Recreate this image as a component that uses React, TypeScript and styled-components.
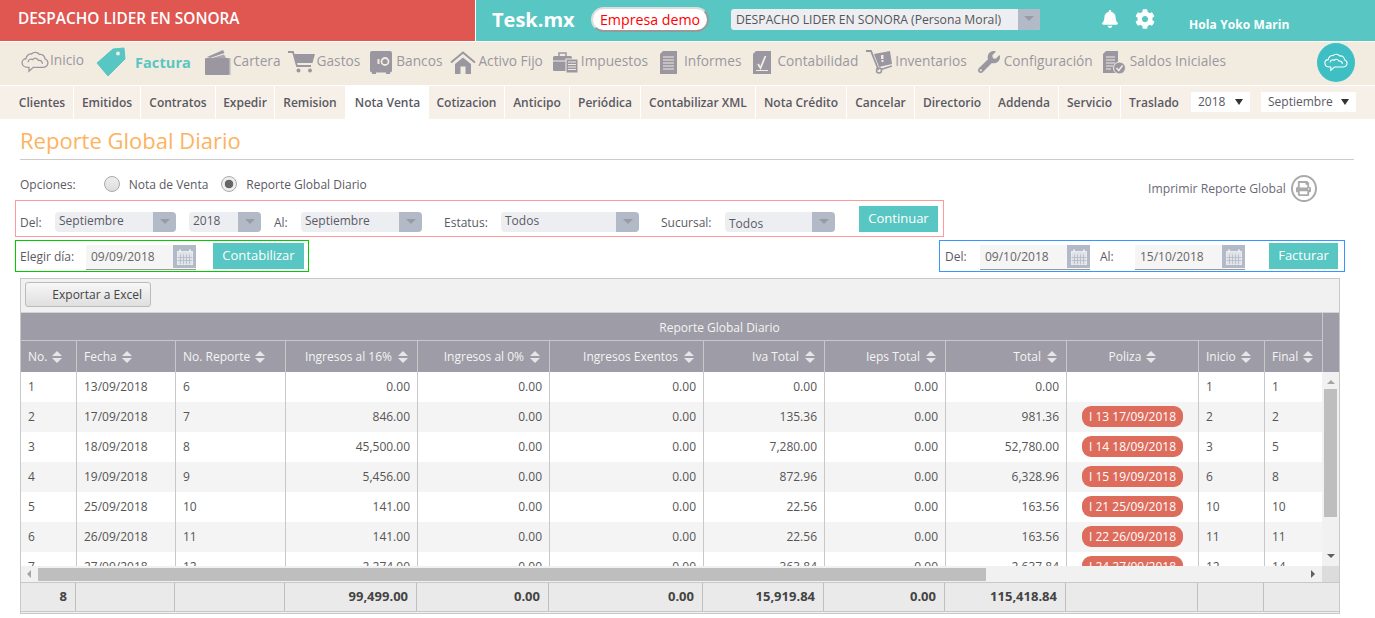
import React from "react";
import styled, { createGlobalStyle } from "styled-components";
import { FaBell, FaCog, FaPrint, FaWrench } from "react-icons/fa";

const Global = createGlobalStyle`
  html, body { margin: 0; padding: 0; background: #fff; }
  body { font-family: "Open Sans", "Liberation Sans", sans-serif; color: #555; overflow: hidden; }
  * { box-sizing: border-box; }
`;

const Page = styled.div`width: 1375px; height: 618px; overflow: hidden;`;
const TopBar = styled.header`display: flex; height: 41px;`;
const Brand = styled.div`
  width: 476px; flex: none; background: #e05651; color: #fff; font-size: 15.4px; font-weight: 600;
  padding: 0 18px; line-height: 37px; border-right: 1px solid #fff; white-space: nowrap;
`;
const TopRight = styled.div`flex: 1; background: #58c6c2; display: flex; align-items: center; color: #fff;`;
const Logo = styled.div`font-size: 20px; font-weight: 700; margin-left: 16px; width: 99px; margin-top: -2px;`;
const DemoPill = styled.div`
  width: 118px; height: 25px; border-radius: 13px; background: #fff; color: #f00; font-size: 14.2px;
  border: 2px solid #ddd; border-right-color: #999; border-bottom-color: #999; text-align: center;
  line-height: 21px; margin-top: -2px; white-space: nowrap;
`;
const CompanySelect = styled.div`
  margin-left: 22px; margin-top: -2px; width: 309px; height: 21px; background: #edeef2; border-radius: 3px;
  display: flex; overflow: hidden; color: #555; font-size: 12.2px; line-height: 21px;
`;
const SelectText = styled.span`flex: 1; padding-left: 5px; white-space: nowrap;`;
const Arrow = styled.span<{ $w: number }>`
  width: ${p => p.$w}px; flex: none; background: #b3bac7; display: flex; justify-content: center; padding-top: 7px;
  &::after { content: ""; border: 5px solid transparent; border-top: 5px solid #9a9aa2; border-bottom: 0; height: 0; }
`;
const TopIcons = styled.div`margin-left: 61px; display: flex; gap: 16px; font-size: 18px; margin-top: -4px; align-items: center; width: 72px;`;
const GearWrap = styled.span`display: flex; font-size: 20px;`;
const Hello = styled.div`margin-left: 16px; font-size: 12px; font-weight: 700; margin-top: 8px; letter-spacing: 0.1px;`;

const MainNav = styled.nav`
  height: 44px; margin-top: 1px; background: #f2ece0; display: flex; align-items: center; padding: 0 0 3px 20px; position: relative;
  border-bottom: 1px solid #fff;
`;
const NavItem = styled.div<{ $ml?: number }>`
  display: flex; align-items: center; margin-left: ${p => p.$ml ?? 0}px;
  color: #9a97a1; font-size: 13.7px; font-weight: 500; white-space: nowrap;
`;
const NavLabel = styled.span<{ $ml: number }>`position: relative; top: -2px; margin-left: ${p => p.$ml}px;`;
const ActiveLabel = styled.span`margin-left: 9px; color: #58c6c2; font-size: 14.5px; font-weight: 700; letter-spacing: 0.1px;`;
const NavSvg = styled.svg`flex: none; display: block;`;
const WrenchWrap = styled.span`display: flex; font-size: 22px; color: #9a97a1; width: 22px;`;
const CloudBtn = styled.div`
  position: absolute; left: 1317px; top: 1px; width: 38px; height: 39px; border-radius: 50%; background: #3dbfc4;
  display: flex; align-items: center; justify-content: center;
`;

const SubNav = styled.nav`height: 33px; background: #f6f0e8; display: flex; padding-left: 11px; align-items: stretch;`;
const SubItem = styled.div<{ $w: number; $active?: boolean; $last?: boolean }>`
  width: ${p => p.$w}px; text-align: center; font-size: 12px; font-weight: 600; line-height: 33px; color: #5a5963;
  border-right: ${p => (p.$active || p.$last) ? "0" : "1px solid #fff"}; background: ${p => p.$active ? "#fff" : "transparent"}; white-space: nowrap;
`;
const SubSelect = styled.div<{ $w: number; $ml: number }>`
  width: ${p => p.$w}px; margin-left: ${p => p.$ml}px; height: 20px; margin-top: 6px; background: #fff; font-size: 12px;
  line-height: 20px; padding: 0 7px; color: #5a5963; display: flex; justify-content: space-between; align-items: center;
  &::after { content: ""; border: 4px solid transparent; border-top: 6px solid #333; border-bottom: 0; height: 0; }
`;

const Content = styled.main`padding: 0 0 0 20px; position: relative;`;
const Title = styled.h1`
  margin: 0; width: 1334px; font-size: 22px; font-weight: 400; color: #fdb35f; height: 41px; line-height: 42px; border-bottom: 1px solid #ccc;
`;
const Options = styled.div`display: flex; align-items: center; height: 26px; margin-top: 11px; font-size: 12px; color: #5b5a64;`;
const Radio = styled.span<{ $on?: boolean; $ml: number }>`
  width: 16px; height: 16px; border-radius: 50%; border: 1px solid #aaa; margin-left: ${p => p.$ml}px; margin-right: 9px; flex: none;
  background: ${p => p.$on ? "radial-gradient(circle, #666 0 4px, #eee 4.6px)" : "linear-gradient(#eee, #ddd)"};
`;
const PrintLink = styled.div`
  position: absolute; left: 1148px; top: 56px; display: flex; align-items: center; gap: 5px; font-size: 12.2px; color: #6d6a78;
`;
const PrintCircle = styled.span`
  width: 26px; height: 27px; border: 2px solid #aaa; border-radius: 50%; display: flex; align-items: center; justify-content: center; color: #aaa; font-size: 15px;
`;
const FilterBox = styled.div`
  margin: 3px 0 0 -5px; width: 929px; height: 37px; border: 1px solid #ff9a9a; display: flex; align-items: flex-start; font-size: 12px; color: #5b5a64;
`;
const Lbl = styled.span<{ $w: number; $ml?: number; $mt?: number }>`
  width: ${p => p.$w}px; margin-left: ${p => p.$ml ?? 0}px; margin-top: ${p => p.$mt ?? 0}px; flex: none; white-space: nowrap;
`;
const Sel = styled.div<{ $w: number; $ml?: number }>`
  width: ${p => p.$w}px; margin-left: ${p => p.$ml ?? 0}px; margin-top: 11px; height: 20px; flex: none; background: #edeef2; border-radius: 4px; overflow: hidden;
  display: flex; line-height: 18px; color: #5b5a64; font-size: 12px;
`;
const SelTxt = styled.span<{ $dy?: number }>`flex: 1; padding-left: 4px; padding-top: ${p => p.$dy ?? 0}px;`;
const ActionBtn = styled.div<{ $w: number; $ml?: number; $mt?: number }>`
  width: ${p => p.$w}px; height: 26px; margin-left: ${p => p.$ml ?? 0}px; margin-top: ${p => p.$mt ?? 0}px; background: #58c6c2; color: #fff; font-size: 13px; flex: none;
  text-align: center; line-height: 25px;
`;
const DateRow = styled.div`display: flex; margin-left: -5px; margin-top: 3px; width: 1330px; justify-content: space-between;`;
const DateBox = styled.div<{ $c: string; $w: number }>`
  width: ${p => p.$w}px; height: 32px; border: 1px solid ${p => p.$c}; display: flex; align-items: center; font-size: 12px; color: #5b5a64;
`;
const DateField = styled.div`
  width: 110px; height: 25px; flex: none; background: #f5f5f5; border-bottom: 1px solid #999; display: flex; justify-content: space-between; line-height: 23px; padding-left: 5px; color: #666; margin-top: 3px;
`;
const CalBtn = styled.span`
  width: 23px; height: 23px; background: #b3bac7; display: flex; align-items: center; justify-content: center;
`;

const Panel = styled.section`
  margin-top: 6px; width: 1320px; height: 336px; border: 1px solid #c8c8c8; background: #f1f1f1; display: flex; flex-direction: column;
`;
const PanelBar = styled.div`height: 33px; padding: 3px 4px; flex: none;`;
const ExcelBtn = styled.div`
  width: 126px; height: 25px; border: 1px solid #bbb; border-radius: 3px; background: linear-gradient(#f7f7f7, #dfdfdf); font-size: 12px; color: #444;
  text-align: right; padding-right: 8px; line-height: 24px;
`;
const TableHead = styled.div`display: flex; background: #9e9ca6; height: 60px; flex: none; color: #fff; border-top: 1px solid #d3d3d3;`;
const HeadMain = styled.div`width: 1302px; border-right: 1px solid #c8c8c8;`;
const HeadTitle = styled.div`
  height: 28px; border-bottom: 1px solid #c8c8c8; text-align: center; font-size: 12px; font-weight: 400; line-height: 29px; color: #f4f4f4; padding-left: 96px;
`;
const HeadRow = styled.div`display: flex; height: 31px;`;
const HCell = styled.div<{ $w: number; $a: string }>`
  width: ${p => p.$w}px; flex: none; border-right: 1px solid #c8c8c8; font-size: 12px; color: #f4f4f4; line-height: 30px;
  padding: 0 ${p => p.$a === "flex-end" ? 9 : 7}px 0 7px;
  display: flex; align-items: center; justify-content: ${p => p.$a}; gap: ${p => p.$a === "flex-end" ? 6 : 5}px; white-space: nowrap;
  &:last-child { border-right: 0; }
`;
const SortIcon = styled.span`
  display: inline-flex; flex-direction: column; gap: 2px;
  &::before { content: ""; border: 5px solid transparent; border-bottom: 5px solid #e6e6e9; border-top: 0; }
  &::after { content: ""; border: 5px solid transparent; border-top: 5px solid #e6e6e9; border-bottom: 0; }
`;
const BodyWrap = styled.div`display: flex; height: 194px; flex: none; background: #fff;`;
const BodyClip = styled.div`width: 1301px; height: 194px; overflow: hidden;`;
const Tbl = styled.table`border-collapse: separate; border-spacing: 0; table-layout: fixed; width: 1301px;`;
const Col = styled.col<{ $w: number }>`width: ${p => p.$w}px;`;
const Tr = styled.tr<{ $alt: boolean }>`background: ${p => p.$alt ? "#f4f4f4" : "#fff"};`;
const Td = styled.td<{ $r?: boolean }>`
  height: 30px; padding: 0 7px; font-size: 12px; color: #555; border-right: 1px solid #c8c8c8;
  text-align: ${p => p.$r ? "right" : "left"}; white-space: nowrap; line-height: 28px;
  &:last-child { border-right: 0; }
`;
const PolizaTd = styled(Td)`text-align: center; padding: 0;`;
const Badge = styled.span`
  display: inline-block; width: 101px; height: 21px; margin-top: 3px; border-radius: 9px; background: #de6c5c; color: #fff; font-size: 12px; line-height: 21px; vertical-align: top;
`;
const VBar = styled.div`width: 17px; background: #f1f1f1; display: flex; flex-direction: column; align-items: center;`;
const ArrowUp = styled.span`margin-top: 8px; border: 4px solid transparent; border-bottom: 4px solid #a5a5a5; border-top: 0;`;
const ArrowDown = styled.span`margin-top: auto; margin-bottom: 8px; border: 4px solid transparent; border-top: 4px solid #606060; border-bottom: 0;`;
const VThumb = styled.div`width: 13px; height: 128px; background: #bebebe; margin-top: 5px;`;
const HBarWrap = styled.div`display: flex; height: 16px; flex: none;`;
const HBar = styled.div`width: 1301px; background: #f1f1f1; display: flex; align-items: center; padding-left: 6px;`;
const ArrowLeft = styled.span`border: 4px solid transparent; border-right: 4px solid #a5a5a5; border-left: 0;`;
const HThumb = styled.div`width: 948px; height: 13px; margin-left: 7px; background: #bebebe;`;
const ArrowRight = styled.span`margin-left: auto; margin-right: 7px; border: 4px solid transparent; border-left: 4px solid #606060; border-right: 0;`;
const Corner = styled.div`width: 17px; background: #dcdcdc;`;
const Foot = styled.div`display: flex; height: 30px; flex: none; border-top: 1px solid #c8c8c8; border-bottom: 1px solid #c8c8c8; background: #eaeaea;`;
const FCell = styled.div<{ $w: number }>`
  width: ${p => p.$w}px; flex: none; border-right: 1px solid #c0c0c0; text-align: right; padding: 0 8px; font-size: 13px; font-weight: 700; color: #444; line-height: 27px;
  &:last-child { border-right: 0; }
`;

const Cloud = ({ c, s }: { c: string; s: number }) => (
  <NavSvg width={s} height={s * 0.8} viewBox="0 0 32 26" fill="none" stroke={c} strokeWidth="1.5">
    <path d="M8 19C3 19 1 16 1 13.500 1 11 3 9 5.500 9 6 5 9 3 12 3.500 14 1 19 1 21 4 25 3.500 27.500 6 27.500 9 30 10 31 12 31 14 31 17 28 19 25 19L14 19 9 23.500 9 19Z" />
    <path d="M8 13C8 10 11 8.500 13.500 10 15 7.500 19 8 20 11 23 10.500 25 12.500 24.500 15" />
  </NavSvg>
);

const Calendar = () => (
  <NavSvg width="16" height="16" viewBox="0 0 16 16" fill="none" stroke="#e9ecef">
    <rect x="0.500" y="2.500" width="15" height="13" fill="#dfe3e8" />
    <path d="M3 0.500v3M13 0.500v3" strokeWidth="2" />
    <path d="M3.500 5.500v10M6.500 5.500v10M9.500 5.500v10M12.500 5.500v10M0.500 8.500h15M0.500 11.500h15" stroke="#b3bac7" strokeWidth="0.800" />
  </NavSvg>
);

const Tag = () => (
  <NavSvg width="30" height="30" viewBox="0 0 30 30">
    <path d="M1 16 17 2 28 1 29 12 12 29Z" fill="#58c6c2" stroke="#58c6c2" strokeWidth="1" strokeLinejoin="round" />
    <circle cx="22" cy="6.500" r="2" fill="#f2ece0" />
  </NavSvg>
);
const Wallet = () => (
  <NavSvg width="26" height="25" viewBox="0 0 26 25" fill="#9a97a1">
    <path d="M2 7 18 0 19.500 3 5 8Z" />
    <path d="M7 8 19 4.500 21 8Z" fill="#aaa7b0" />
    <rect x="0" y="8" width="24" height="17" rx="1" />
    <rect x="24" y="8" width="1.500" height="17" fill="#b5b3bb" />
  </NavSvg>
);
const Cart = () => (
  <NavSvg width="27" height="22" viewBox="0 0 27 22" fill="#9a97a1">
    <path d="M0 1H5L9 15H23" fill="none" stroke="#9a97a1" strokeWidth="1.800" />
    <path d="M6 3H27L24.500 12H8.500Z" />
    <circle cx="10.500" cy="19.500" r="2" />
    <circle cx="22" cy="19.500" r="2" />
  </NavSvg>
);
const Safe = () => (
  <NavSvg width="22" height="23" viewBox="0 0 22 23">
    <rect x="0" y="0" width="22" height="21.500" rx="2" fill="#9a97a1" />
    <rect x="2" y="21" width="4" height="2" fill="#9a97a1" />
    <rect x="16" y="21" width="4" height="2" fill="#9a97a1" />
    <circle cx="15" cy="10.500" r="3.500" fill="none" stroke="#f2ece0" strokeWidth="1.800" />
    <rect x="7.500" y="8" width="2" height="5" fill="#f2ece0" />
  </NavSvg>
);
const House = () => (
  <NavSvg width="26" height="23" viewBox="0 0 26 23" fill="#9a97a1">
    <path d="M1 11.500 13 1.500 25 11.500" fill="none" stroke="#9a97a1" strokeWidth="2" />
    <path d="M5 13 13 6.500 21 13V23H15.500V15.500H10.500V23H5Z" />
  </NavSvg>
);
const Clip = () => (
  <NavSvg width="25" height="21" viewBox="0 0 25 21" fill="#9a97a1">
    <rect x="0" y="4" width="19" height="15" rx="1.500" />
    <rect x="6" y="1" width="7" height="4" fill="none" stroke="#9a97a1" strokeWidth="1.500" />
    <path d="M0 9H13" stroke="#f2ece0" />
    <rect x="13" y="7" width="12" height="14" stroke="#f2ece0" />
    <path d="M15 10H23M15 12.500H23M15 15H23M15 17.500H23" stroke="#f2ece0" />
  </NavSvg>
);
const Doc = () => (
  <NavSvg width="17" height="23" viewBox="0 0 17 23" fill="#9a97a1">
    <path d="M3 0H17V23H0V3Z" />
    <path d="M3 6H14M3 9H14M3 12H14M3 15H14M3 18H14" stroke="#f2ece0" strokeWidth="1.200" />
  </NavSvg>
);
const Ledger = () => (
  <NavSvg width="18" height="23" viewBox="0 0 18 23" fill="#9a97a1">
    <path d="M3 0H18V23H0V3Z" />
    <path d="M5 13 7.500 17 12.500 5" stroke="#f2ece0" strokeWidth="1.800" fill="none" />
    <path d="M3 19.500H15" stroke="#f2ece0" strokeWidth="1" />
  </NavSvg>
);
const Truck = () => (
  <NavSvg width="26" height="24" viewBox="0 0 26 24" fill="#9a97a1">
    <path d="M0 1H5L12.500 20" stroke="#9a97a1" strokeWidth="1.800" fill="none" />
    <path d="M8 4 24 1 26 14 13 17Z" />
    <rect x="15" y="5" width="2.500" height="4" fill="#f2ece0" />
    <rect x="15.500" y="10" width="2" height="2" fill="#f2ece0" />
    <circle cx="13" cy="20.500" r="2.500" fill="none" stroke="#9a97a1" strokeWidth="1.500" />
    <path d="M15 19.500 26 16" stroke="#9a97a1" strokeWidth="1.500" />
  </NavSvg>
);
const DocCheck = () => (
  <NavSvg width="23" height="23" viewBox="0 0 23 23" fill="#9a97a1">
    <path d="M3 0H15V22H0V3Z" />
    <path d="M3 6H12M3 9H12M3 12H12M3 15H10M3 18H8" stroke="#f2ece0" strokeWidth="1.200" />
    <circle cx="16.500" cy="17" r="6" stroke="#f2ece0" strokeWidth="1" />
    <path d="M13.500 17 15.800 19.500 19.500 14.500" stroke="#f2ece0" strokeWidth="1.500" fill="none" />
  </NavSvg>
);

const subs: [string, number, boolean?][] = [
  ["Clientes", 63], ["Emitidos", 67], ["Contratos", 75], ["Expedir", 59], ["Remision", 71],
  ["Nota Venta", 83, true], ["Cotizacion", 76], ["Anticipo", 65], ["Periódica", 71], ["Contabilizar XML", 115],
  ["Nota Crédito", 91], ["Cancelar", 68], ["Directorio", 75], ["Addenda", 69], ["Servicio", 62], ["Traslado", 66],
];

const cols = [56, 99, 110, 132, 132, 154, 121, 121, 121, 132, 66, 57];
const heads: [string, string][] = [
  ["No.", "flex-start"], ["Fecha", "flex-start"], ["No. Reporte", "flex-start"], ["Ingresos al 16%", "flex-end"],
  ["Ingresos al 0%", "flex-end"], ["Ingresos Exentos", "flex-end"], ["Iva Total", "flex-end"], ["Ieps Total", "flex-end"],
  ["Total", "flex-end"], ["Poliza", "center"], ["Inicio", "flex-start"], ["Final", "flex-start"],
];
const rows = [
  ["1", "13/09/2018", "6", "0.00", "0.00", "0.00", "0.00", "0.00", "0.00", "", "1", "1"],
  ["2", "17/09/2018", "7", "846.00", "0.00", "0.00", "135.36", "0.00", "981.36", "I 13 17/09/2018", "2", "2"],
  ["3", "18/09/2018", "8", "45,500.00", "0.00", "0.00", "7,280.00", "0.00", "52,780.00", "I 14 18/09/2018", "3", "5"],
  ["4", "19/09/2018", "9", "5,456.00", "0.00", "0.00", "872.96", "0.00", "6,328.96", "I 15 19/09/2018", "6", "8"],
  ["5", "25/09/2018", "10", "141.00", "0.00", "0.00", "22.56", "0.00", "163.56", "I 21 25/09/2018", "10", "10"],
  ["6", "26/09/2018", "11", "141.00", "0.00", "0.00", "22.56", "0.00", "163.56", "I 22 26/09/2018", "11", "11"],
  ["7", "27/09/2018", "12", "2,274.00", "0.00", "0.00", "363.84", "0.00", "2,637.84", "I 24 27/09/2018", "12", "14"],
];
const foot = ["8", "", "", "99,499.00", "0.00", "0.00", "15,919.84", "0.00", "115,418.84", "", "", ""];
const footW = [55, 99, 110, 132, 132, 154, 121, 121, 121, 132, 66, 58];
const rightCols = new Set([3, 4, 5, 6, 7, 8]);

export default function App() {
  return (
    <Page>
      <Global />
      <TopBar>
        <Brand>DESPACHO LIDER EN SONORA</Brand>
        <TopRight>
          <Logo>Tesk.mx</Logo>
          <DemoPill>Empresa demo</DemoPill>
          <CompanySelect>
            <SelectText>DESPACHO LIDER EN SONORA (Persona Moral)</SelectText>
            <Arrow $w={22} />
          </CompanySelect>
          <TopIcons><FaBell /><GearWrap><FaCog /></GearWrap></TopIcons>
          <Hello>Hola Yoko Marin</Hello>
        </TopRight>
      </TopBar>
      <MainNav>
        <NavItem $ml={1}><Cloud c="#9a97a1" s={28} /><NavLabel $ml={1}>Inicio</NavLabel></NavItem>
        <NavItem $ml={12}><Tag /><ActiveLabel>Factura</ActiveLabel></NavItem>
        <NavItem $ml={14}><Wallet /><NavLabel $ml={2}>Cartera</NavLabel></NavItem>
        <NavItem $ml={7}><Cart /><NavLabel $ml={2}>Gastos</NavLabel></NavItem>
        <NavItem $ml={10}><Safe /><NavLabel $ml={4}>Bancos</NavLabel></NavItem>
        <NavItem $ml={8}><House /><NavLabel $ml={2}>Activo Fijo</NavLabel></NavItem>
        <NavItem $ml={10}><Clip /><NavLabel $ml={3}>Impuestos</NavLabel></NavItem>
        <NavItem $ml={12}><Doc /><NavLabel $ml={7}>Informes</NavLabel></NavItem>
        <NavItem $ml={12}><Ledger /><NavLabel $ml={6}>Contabilidad</NavLabel></NavItem>
        <NavItem $ml={8}><Truck /><NavLabel $ml={3}>Inventarios</NavLabel></NavItem>
        <NavItem $ml={11}><WrenchWrap><FaWrench /></WrenchWrap><NavLabel $ml={4}>Configuración</NavLabel></NavItem>
        <NavItem $ml={10}><DocCheck /><NavLabel $ml={4}>Saldos Iniciales</NavLabel></NavItem>
        <CloudBtn><Cloud c="#fff" s={24} /></CloudBtn>
      </MainNav>
      <SubNav>
        {subs.map(([t, w, a], i) => <SubItem key={t} $w={w} $active={a} $last={i === subs.length - 1}>{t}</SubItem>)}
        <SubSelect $w={59} $ml={4}>2018</SubSelect>
        <SubSelect $w={95} $ml={11}>Septiembre</SubSelect>
      </SubNav>
      <Content>
        <Title>Reporte Global Diario</Title>
        <Options>
          Opciones:
          <Radio $ml={28} />Nota de Venta
          <Radio $ml={13} $on />Reporte Global Diario
        </Options>
        <PrintLink>
          Imprimir Reporte Global
          <PrintCircle><FaPrint /></PrintCircle>
        </PrintLink>
        <FilterBox>
          <Lbl $w={35} $ml={4} $mt={13}>Del:</Lbl>
          <Sel $w={121}><SelTxt>Septiembre</SelTxt><Arrow $w={23} /></Sel>
          <Sel $w={72} $ml={13}><SelTxt>2018</SelTxt><Arrow $w={23} /></Sel>
          <Lbl $w={27} $ml={13} $mt={13}>Al:</Lbl>
          <Sel $w={121}><SelTxt>Septiembre</SelTxt><Arrow $w={23} /></Sel>
          <Lbl $w={57} $ml={22} $mt={13}>Estatus:</Lbl>
          <Sel $w={138}><SelTxt>Todos</SelTxt><Arrow $w={23} /></Sel>
          <Lbl $w={64} $ml={22} $mt={13}>Sucursal:</Lbl>
          <Sel $w={110}><SelTxt $dy={3}>Todos</SelTxt><Arrow $w={23} /></Sel>
          <ActionBtn $w={79} $ml={24} $mt={5}>Continuar</ActionBtn>
        </FilterBox>
        <DateRow>
          <DateBox $c="#0c0" $w={294}>
            <Lbl $w={66} $ml={4}>Elegir día:</Lbl>
            <DateField>09/09/2018<CalBtn><Calendar /></CalBtn></DateField>
            <ActionBtn $w={91} $ml={17}>Contabilizar</ActionBtn>
          </DateBox>
          <DateBox $c="#39f" $w={406}>
            <Lbl $w={35} $ml={5}>Del:</Lbl>
            <DateField>09/10/2018<CalBtn><Calendar /></CalBtn></DateField>
            <Lbl $w={35} $ml={10}>Al:</Lbl>
            <DateField>15/10/2018<CalBtn><Calendar /></CalBtn></DateField>
            <ActionBtn $w={69} $ml={24}>Facturar</ActionBtn>
          </DateBox>
        </DateRow>
        <Panel>
          <PanelBar><ExcelBtn>Exportar a Excel</ExcelBtn></PanelBar>
          <TableHead>
            <HeadMain>
              <HeadTitle>Reporte Global Diario</HeadTitle>
              <HeadRow>
                {heads.map(([h, a], i) => (
                  <HCell key={h} $w={cols[i]} $a={a}>{h}<SortIcon /></HCell>
                ))}
              </HeadRow>
            </HeadMain>
          </TableHead>
          <BodyWrap>
            <BodyClip>
              <Tbl>
                <colgroup>{cols.map((w, i) => <Col key={i} $w={w} />)}</colgroup>
                <tbody>
                  {rows.map((r, i) => (
                    <Tr key={i} $alt={i % 2 === 1}>
                      {r.map((c, j) => j === 9
                        ? <PolizaTd key={j}>{c && <Badge>{c}</Badge>}</PolizaTd>
                        : <Td key={j} $r={rightCols.has(j)}>{c}</Td>)}
                    </Tr>
                  ))}
                </tbody>
              </Tbl>
            </BodyClip>
            <VBar><ArrowUp /><VThumb /><ArrowDown /></VBar>
          </BodyWrap>
          <HBarWrap>
            <HBar><ArrowLeft /><HThumb /><ArrowRight /></HBar>
            <Corner />
          </HBarWrap>
          <Foot>
            {foot.map((f, i) => <FCell key={i} $w={footW[i]}>{f}</FCell>)}
          </Foot>
        </Panel>
      </Content>
    </Page>
  );
}
